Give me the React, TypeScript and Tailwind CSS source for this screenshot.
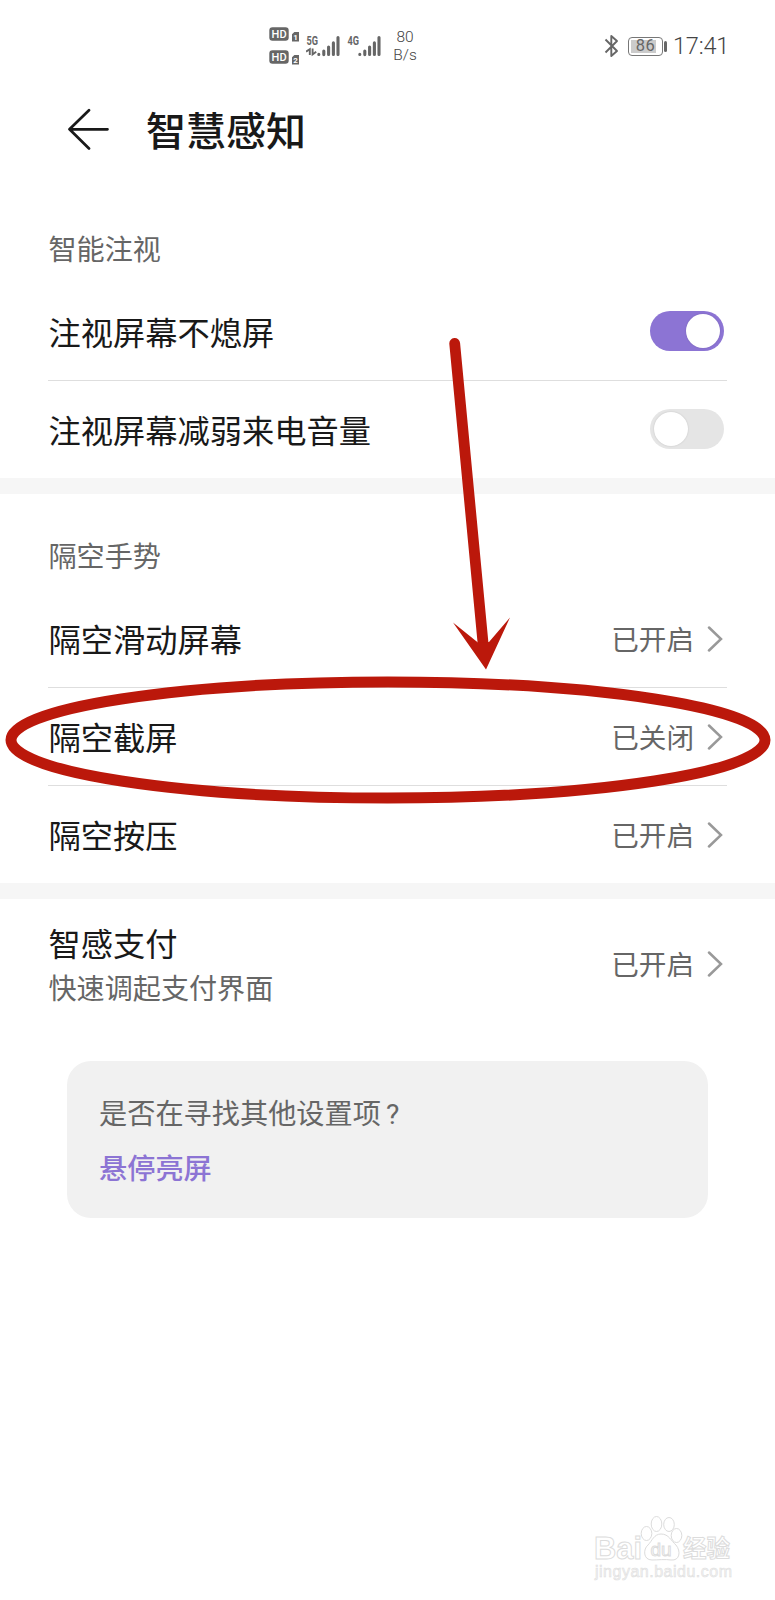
import { type ReactNode } from 'react';
import clsx from 'clsx';

const gestures = [
  { id: 'swipe', title: '隔空滑动屏幕', value: '已开启' },
  { id: 'capture', title: '隔空截屏', value: '已关闭' },
  { id: 'press', title: '隔空按压', value: '已开启' },
];

function HdBadge({ sim }: { sim: number }) {
  return (
    <svg width="31" height="15" viewBox="0 0 31 15">
      <rect x="0.3" y="0.3" width="19.4" height="13.4" rx="3.2" fill="#666" />
      <text
        x="2.6"
        y="11.2"
        fontSize="11.8"
        fontWeight="500"
        fill="#fff"
        textLength="15"
        lengthAdjust="spacingAndGlyphs"
        fontFamily="Roboto, sans-serif"
      >
        HD
      </text>
      <path d="M23 7.2 25.4 5H30v9.4h-7z" fill="#666" />
      <text x="26.6" y="13" textAnchor="middle" fontSize="8" fontWeight="700" fill="#fff" fontFamily="Roboto, sans-serif">
        {sim}
      </text>
    </svg>
  );
}

function Signal({ label, data }: { label: string; data?: boolean }) {
  return (
    <svg width="35" height="30" viewBox="0 -3 35 30">
      <text
        x="0.5"
        y="10.5"
        fontSize="13"
        fontWeight="700"
        fill="#666"
        textLength="11.5"
        lengthAdjust="spacingAndGlyphs"
        fontFamily="Roboto, sans-serif"
      >
        {label}
      </text>
      {data && <path d="M0 17.6 3.8 15.2V21M6.6 14.6v5.8l3.6-2.6" fill="none" stroke="#666" strokeWidth="1.9" />}
      <g stroke="#666" strokeWidth="3.1" strokeLinecap="round">
        <path d="M12.8 20.4v.1M17.8 17.1v3.5M22.6 13v7.5M27.4 8.9v11.6M32 3.5v17" />
      </g>
    </svg>
  );
}

function StatusBar() {
  return (
    <header className="flex h-[92px] items-center pl-[269px] pr-[46px] font-['Roboto',sans-serif] text-[#666]">
      <div className="flex flex-col gap-2">
        <HdBadge sim={1} />
        <HdBadge sim={2} />
      </div>
      <div className="ml-[6px] flex gap-[6px]">
        <Signal label="5G" data />
        <Signal label="4G" />
      </div>
      <div className="ml-[11px] flex w-6 flex-col items-center text-[15.5px] leading-[18px] font-light whitespace-nowrap text-[#444]">
        <span>80</span>
        <span>B/s</span>
      </div>
      <div className="ml-auto flex items-center">
        <svg width="15" height="24" viewBox="0 0 15 24" fill="none" stroke="#666" strokeWidth="1.9" strokeLinejoin="round">
          <path d="M1.5 5.5 13 17 7.3 22V2L13 7 1.5 18.5" />
        </svg>
        <div className="ml-[9px] flex h-[19px] w-[35px] items-center justify-center rounded-[4px] border border-[#777] p-[2px]">
          <span className="flex h-full w-full items-center justify-center bg-gradient-to-r from-[#cbcbcb] from-85% to-transparent to-85% text-[16.5px] leading-none tracking-[0.5px]">
            86
          </span>
        </div>
        <div className="ml-px h-[11px] w-[3px] rounded-sm bg-[#666]" />
        <span className="ml-[6px] w-[56px] text-[23.5px] leading-6 font-light whitespace-nowrap tracking-[-0.2px] text-[#444]">
          17:41
        </span>
      </div>
    </header>
  );
}

function SectionLabel({ children }: { children: ReactNode }) {
  return <h2 className="flex h-24 items-center pt-[32px] pl-[0.5px] text-[28.1px] leading-none text-[#666]">{children}</h2>;
}

function Row({ title, divider, children }: { title: string; divider?: boolean; children: ReactNode }) {
  return (
    <div
      className={clsx(
        'flex items-center justify-between',
        divider ? 'h-[98px] border-b border-[#dedede]' : 'h-[97px]'
      )}
    >
      <span className="pt-[5px] pl-[0.5px] text-[32.25px] leading-none">{title}</span>
      {children}
    </div>
  );
}

function Toggle({ on }: { on?: boolean }) {
  return (
    <button
      role="switch"
      aria-checked={!!on}
      className={clsx(
        'mr-[3.5px] mb-[2px] flex h-10 w-[74px] items-center rounded-full px-[4px]',
        on ? 'justify-end bg-[#8c74d4]' : 'bg-[#e5e5e5]'
      )}
    >
      <span className="h-[34px] w-[34px] rounded-full bg-white shadow-[0_0_2px_rgba(0,0,0,0.15)]" />
    </button>
  );
}

function Value({ children }: { children: ReactNode }) {
  return (
    <span className="flex items-center pr-[4px] text-[27.6px] leading-none text-[#666]">
      <span className="pt-[4px]">{children}</span>
      <svg className="ml-[13px]" width="16" height="26" viewBox="0 0 16 26" fill="none" stroke="#999" strokeWidth="2.5">
        <path d="M2 1.5 14 13 2 24.5" strokeLinecap="round" />
      </svg>
    </span>
  );
}

function Watermark() {
  return (
    <svg
      className="absolute top-[1510px] left-[590px]"
      width="150"
      height="75"
      viewBox="0 0 150 75"
      fill="#fff"
      stroke="#dcdcdc"
      strokeWidth="1"
    >
      <text
        x="4"
        y="49"
        fontSize="32"
        fontWeight="700"
        textLength="48"
        lengthAdjust="spacingAndGlyphs"
        fontFamily="Liberation Sans, sans-serif"
      >
        Bai
      </text>
      <ellipse cx="56.5" cy="23.5" rx="5.3" ry="7" />
      <ellipse cx="66.5" cy="14" rx="5.3" ry="7.5" />
      <ellipse cx="79" cy="14.5" rx="5.3" ry="7" />
      <ellipse cx="86.5" cy="25.5" rx="5.3" ry="7" />
      <path d="M71 24c-7 0-9 7-13 11-5 4-5 15 4 15 5 0 14-1 19 0 9 1 10-9 5-15-5-4-7-11-15-11z" />
      <text x="71" y="46" textAnchor="middle" fontSize="19" textLength="21" fontFamily="Liberation Sans, sans-serif">
        du
      </text>
      <text x="93" y="47" fontSize="23.5" fontWeight="700" fontFamily="Noto Sans CJK SC, sans-serif">
        经验
      </text>
      <text
        x="5"
        y="67"
        fontSize="16"
        textLength="137"
        strokeWidth="0.5"
        fill="#f3f3f3"
        fontFamily="Liberation Sans, sans-serif"
      >
        jingyan.baidu.com
      </text>
    </svg>
  );
}

// Red pen marks drawn above the list
function Annotation() {
  return (
    <svg className="pointer-events-none absolute inset-0" width="775" height="1600" viewBox="0 0 775 1600">
      <ellipse cx="388" cy="740" rx="377" ry="58" fill="none" stroke="#bb180b" strokeWidth="11" />
      <path d="M454.7 343.5 483.5 648" stroke="#bb180b" strokeWidth="10.8" strokeLinecap="round" />
      <path d="M486 669.5 453 622.5 478.5 643 489 642 510 617.5z" fill="#bb180b" />
    </svg>
  );
}

export default function App() {
  return (
    <main className="relative h-[1600px] w-[775px] overflow-hidden bg-white font-['Roboto','Noto_Sans_CJK_SC',sans-serif] text-[#191919]">
      <StatusBar />

      <div className="flex h-[95px] items-start pt-[16px] pl-[67px]">
        <svg width="43" height="42" viewBox="0 0 43 42" fill="none" stroke="#191919" strokeWidth="2.7" strokeLinecap="round" strokeLinejoin="round">
          <path d="M22 2.2 2.5 21.3 22 40.5M2.5 21.3h38" />
        </svg>
        <h1 className="mt-[5px] ml-9 text-[40px] leading-none font-medium">智慧感知</h1>
      </div>

      <section className="border-b-[16px] border-[#f6f6f6] pr-12 pl-12">
        <SectionLabel>智能注视</SectionLabel>
        <Row title="注视屏幕不熄屏" divider>
          <Toggle on />
        </Row>
        <Row title="注视屏幕减弱来电音量">
          <Toggle />
        </Row>
      </section>

      <section className="border-b-[16px] border-[#f6f6f6] pr-12 pl-12">
        <SectionLabel>隔空手势</SectionLabel>
        {gestures.map((item, i) => (
          <Row key={item.id} title={item.title} divider={i < gestures.length - 1}>
            <Value>{item.value}</Value>
          </Row>
        ))}
      </section>

      <section className="flex h-[162px] items-center justify-between px-12 pb-[32px]">
        <div className="flex flex-col gap-[15px] pt-[5px]">
          <span className="pl-[0.5px] text-[32.25px] leading-none">智感支付</span>
          <span className="pl-[0.5px] text-[28.1px] leading-none text-[#666]">快速调起支付界面</span>
        </div>
        <Value>已开启</Value>
      </section>

      <aside className="mx-[67px] flex h-[157px] flex-col justify-center gap-[26px] rounded-[24px] bg-[#f1f1f1] pt-[6px] pl-8 text-[28.2px] leading-none">
        <p className="text-[#666]">
          是否在寻找其他设置项<span className="ml-[5px]">?</span>
        </p>
        <a className="font-medium text-[#8c74d4]">悬停亮屏</a>
      </aside>

      <Annotation />
      <Watermark />
    </main>
  );
}
